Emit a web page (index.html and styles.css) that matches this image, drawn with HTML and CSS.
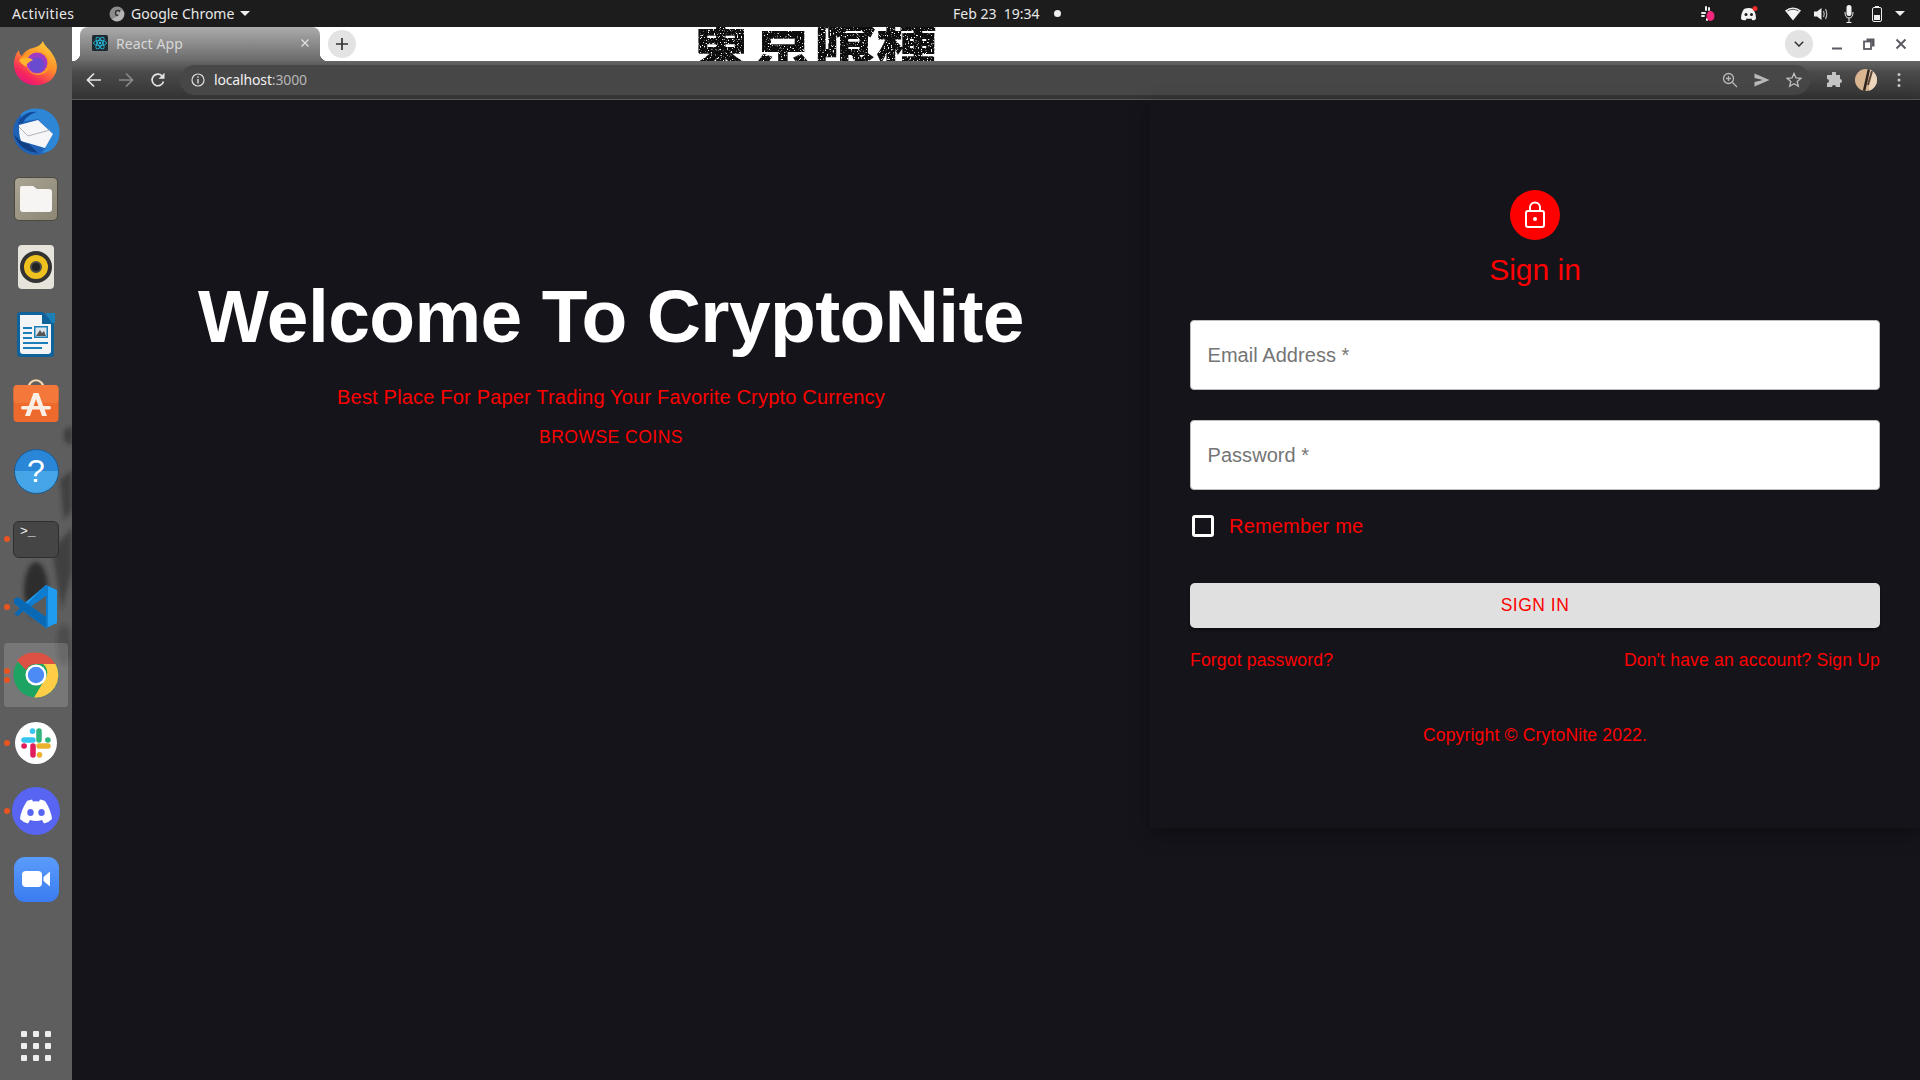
FILE: index.html
```html
<!DOCTYPE html>
<html lang="en">
  <head>
    <meta charset="UTF-8" />
    <title>React App</title>
    <link rel="stylesheet" href="styles.css">
  </head>
  <body>
    <svg class="svg-defs" width="0" height="0">
      <defs>
        <filter id="distress" x="0" y="0" width="100%" height="100%">
          <feTurbulence type="fractalNoise" baseFrequency="0.7" numOctaves="2" seed="4" result="noise"/>
          <feColorMatrix in="noise" type="matrix" values="0 0 0 0 0  0 0 0 0 0  0 0 0 0 0  0 0 0 -8 5.800" result="specks"/>
          <feComposite in="SourceGraphic" in2="specks" operator="in"/>
        </filter>
        <filter id="blur"><feGaussianBlur stdDeviation="2"/></filter>
      </defs>
    </svg>

    <header class="topbar">
      <span class="activities">Activities</span>
      <span class="app-menu">
        <svg class="app-icon" width="16" height="16" viewBox="0 0 16 16"><circle cx="8" cy="8" r="7.500" fill="#8c8c8c"/><circle cx="9" cy="7" r="3.200" fill="#333"/><circle cx="9" cy="7" r="1.800" fill="#aaa"/><path d="M3 13 L9 10 L12 4 L15 6 A7.500 7.500 0 0 1 6 15 Z" fill="#b5b5b5"/></svg>
        Google Chrome
        <i class="caret"></i>
      </span>
      <span class="clock">Feb 23&nbsp; 19:34 <i class="clock-dot"></i></span>
      <span class="tray">
        <svg class="tray-slack" width="14" height="16" viewBox="0 0 14 16"><g fill="#eee"><rect x="4" y="0" width="2" height="5" rx="1"/><rect x="7" y="1" width="2" height="4" rx="1"/><rect x="0" y="6" width="5" height="2" rx="1"/><rect x="0" y="9" width="4" height="2" rx="1"/><rect x="5" y="12" width="2" height="3" rx="1"/></g><ellipse cx="9.500" cy="10" rx="4" ry="5" fill="#f2267a"/></svg>
        <svg class="tray-discord" width="18" height="16" viewBox="0 0 18 16"><path d="M4 3 Q9 1 13 3 Q16 7 16 13 Q14 15 12 14 L11.500 12.500 Q9 13 6.500 12.500 L6 14 Q3 15 1 13 Q1 7 4 3 Z" fill="#f2f2f2"/><circle cx="6" cy="8.500" r="1.500" fill="#1c1c1c"/><circle cx="11.500" cy="8.500" r="1.500" fill="#1c1c1c"/><circle cx="15" cy="2.500" r="2.500" fill="#ef2a2a"/></svg>
        <svg class="tray-wifi" width="16" height="14" viewBox="0 0 16 14"><path d="M0 3.500 Q8 -2.500 16 3.500 L8 13.500 Z" fill="#f4f4f4"/><path d="M2.500 4 Q8 0.500 13.500 4" fill="none" stroke="#555" stroke-width="1"/></svg>
        <svg class="tray-volume" width="15" height="14" viewBox="0 0 15 14"><path d="M0 4.500 H3 L7.500 1 V13 L3 9.500 H0 Z" fill="#eee"/><path d="M9.500 4 Q11 7 9.500 10 M11.500 2 Q14 7 11.500 12" fill="none" stroke="#bbb" stroke-width="1.200"/></svg>
        <svg class="tray-mic" width="10" height="18" viewBox="0 0 10 18"><rect x="2.500" y="0" width="5" height="11" rx="2.500" fill="#f2f2f2"/><path d="M1 7 Q1 13 5 13 Q9 13 9 7 M5 13 V17.500 M2.500 17.500 H7.500" fill="none" stroke="#eee" stroke-width="1"/></svg>
        <svg class="tray-battery" width="10" height="16" viewBox="0 0 10 16"><rect x="0.500" y="1.500" width="9" height="14" rx="1.500" fill="none" stroke="#eee"/><rect x="3" y="0" width="4" height="2" fill="#eee"/><rect x="2" y="9" width="6" height="5" fill="#eee"/></svg>
        <i class="caret tray-caret"></i>
      </span>
    </header>

    <div class="desktop">
      <nav class="dock">
        <svg class="dock-stains" width="72" height="260" viewBox="0 0 72 260"><g fill="#262626" filter="url(#blur)"><ellipse cx="36" cy="170" rx="12" ry="28" opacity=".85"/><path d="M52 130 L72 108 V150 L62 190 Z" opacity=".55"/><path d="M64 10 l8 -4 v20 l-8 -6 Z" opacity=".6"/><path d="M60 60 L72 50 V90 L64 100 Z" opacity=".55"/><ellipse cx="64" cy="225" rx="7" ry="20" opacity=".35"/></g></svg>

        <div class="dock-item">
          <svg width="46" height="46" viewBox="0 0 46 46"><defs><linearGradient id="ffBody" x1="0.800" y1="0" x2="0.200" y2="1"><stop offset="0" stop-color="#ffd43a"/><stop offset=".45" stop-color="#ff8a2a"/><stop offset=".8" stop-color="#f5245f"/><stop offset="1" stop-color="#e31587"/></linearGradient></defs><path d="M30 1 C31 6 37 9 40 15 C46 24 45 33 38 40 C30 47 15 47 7 39 C-1 31 -1 18 6 10 C6 13 7 15 9 16 C11 12 15 9 20 8 C24 7 28 5 30 1 Z" fill="url(#ffBody)"/><path d="M7 19 C13 13 20 11 27 12 C33 13 37 18 37 24 C37 31 31 35 25 35 C19 35 15 31 14 27 C11 27 8 23 7 19 Z" fill="#ff9a26"/><circle cx="24" cy="23" r="10.500" fill="#a23bc4"/><circle cx="24" cy="25" r="7.500" fill="#6a4bd0"/><path d="M6 20 C11 17 16 17 20 20 C16 22 14 23 13 26 C10 25 7 23 6 20 Z" fill="#ffb52e"/></svg>
        </div>
        <div class="dock-item">
          <svg width="50" height="50" viewBox="0 0 50 50"><circle cx="25" cy="26" r="23" fill="#1f62b8"/><path d="M10 8 C18 0 36 0 44 12 C50 20 50 32 45 39 C42 44 36 47 30 47 L36 41 L30 43 L37 37 L42 28 L27 13 L10 16 Z" fill="#2d86d6"/><path d="M8 19 L27 14 L42 28 L34 42 L10 35 C8 30 8 24 8 19 Z" fill="#f6f6f8"/><path d="M8 21 L17 30 L39 24" fill="none" stroke="#aeb4bd" stroke-width="1"/><path d="M7 18 C9 10 17 5 26 6 C19 8 14 12 12 17 Z" fill="#124a9a"/><path d="M3 28 C6 33 12 37 18 38 L27 47 C15 46 6 39 3 28 Z" fill="#123f84"/></svg>
        </div>
        <div class="dock-item">
          <div class="files-tile"><svg width="32" height="26" viewBox="0 0 32 26"><path d="M2 0 H13 L17 3 H29 Q32 3 32 6 V23 Q32 26 29 26 H3 Q0 26 0 23 V2 Q0 0 2 0 Z" fill="#f6f5f3"/></svg></div>
        </div>
        <div class="dock-item">
          <div class="rhythm-tile"><i class="speaker"><i class="speaker-core"></i></i></div>
        </div>
        <div class="dock-item">
          <svg width="38" height="46" viewBox="0 0 38 46"><path d="M4 0 H26 L37 11 V42 Q37 45 34 45 H4 Q0 45 0 42 V3 Q0 0 4 0 Z" fill="#10639a"/><path d="M3 3 H25 V12 H34 V39 Q34 42 31 42 H6 Q3 42 3 39 Z" fill="#f3f4f5"/><path d="M28 1 H38 V11 H35 Z" fill="#1c80b8"/><g fill="#1a7fb8"><rect x="6" y="15" width="9" height="2"/><rect x="6" y="20" width="9" height="2"/><rect x="6" y="25" width="9" height="2"/><rect x="6" y="30" width="25" height="2"/><rect x="6" y="35" width="19" height="2"/></g><rect x="17" y="14" width="14" height="12" fill="#1a7fb8"/><rect x="18.500" y="15.500" width="11" height="9" fill="#dbe3ea"/><path d="M19 24 L23 18 L25 21 L27 19 L29 24 Z" fill="#555"/></svg>
        </div>
        <div class="dock-item">
          <svg width="46" height="48" viewBox="0 0 46 48"><path d="M15 11 C15 -2 31 -2 31 11" fill="none" stroke="#f0d8b0" stroke-width="2.200"/><rect x="0.500" y="6" width="45" height="37" rx="4" fill="#ee6a2c"/><rect x="0.500" y="6" width="45" height="18" rx="4" fill="#f4783a"/><path d="M20.500 14 H25.500 L34 37 H29 L23 20 L17 37 H12 Z" fill="#fbeee4"/><rect x="8" y="27" width="30" height="3.500" rx="1.700" fill="#fbeee4"/></svg>
        </div>
        <div class="dock-item">
          <div class="help-tile">?</div>
        </div>
        <div class="dock-item running">
          <div class="term-tile"><span class="term-prompt">&gt;_</span></div>
        </div>
        <div class="dock-item running">
          <svg width="44" height="44" viewBox="0 0 44 44"><path d="M32 0 L43 5 V38 L32 43 L6 22 Z" fill="#1f9cf0"/><path d="M32 0 L11 21 L2 14 L-1 17 L9 26 L32 43 L34 42 V1 Z" fill="#0f7ccf"/><path d="M32 11 V32 L17 21.500 Z" fill="#5b5b5b"/><path d="M0 14 L4 12 L32 32 V43 L0 18 Z" fill="#0a69b5"/><path d="M0 29 L4 31 L15 21 L11 18 Z" fill="#0a69b5"/></svg>
        </div>
        <div class="dock-item running running-two active">
          <svg width="46" height="46" viewBox="0 0 46 46"><circle cx="23" cy="23" r="22.500" fill="#1da462"/><path d="M23 .5 A22.500 22.500 0 0 1 42.500 12 H23 A11 11 0 0 0 13 18 L4 8.500 A22.500 22.500 0 0 1 23 .5 Z" fill="#dd5144"/><path d="M42.500 12 A22.500 22.500 0 0 1 21 45.400 L31.500 28 A11 11 0 0 0 30 12 Z" fill="#ffcd46"/><circle cx="23" cy="23" r="10.500" fill="#fff"/><circle cx="23" cy="23" r="8.200" fill="#4c8bf5"/></svg>
        </div>
        <div class="dock-item running">
          <div class="slack-tile"><svg width="30" height="30" viewBox="0 0 30 30" fill="none" stroke-width="5.500" stroke-linecap="round"><path d="M3 12 H12 M11.500 3 V3.200" stroke="#36c5f0"/><path d="M18 3 V12 M27 12 H26.800" stroke="#2eb67d"/><path d="M27 18 H18 M18.500 27 V26.800" stroke="#ecb22e"/><path d="M12 27 V18 M3 18 H3.200" stroke="#e01e5a"/></svg></div>
        </div>
        <div class="dock-item running">
          <div class="discord-tile"><svg width="32" height="25" viewBox="0 0 32 25"><path d="M7 2 Q11 .5 12 .5 L13 2.500 Q16 2 19 2.500 L20 .5 Q22 .5 25 2 Q31 11 32 20 Q28 24 24 24.500 L22 21 Q16 23 10 21 L8 24.500 Q4 24 0 20 Q1 11 7 2 Z" fill="#fff"/><ellipse cx="10.500" cy="13.500" rx="3.200" ry="3.500" fill="#5865f2"/><ellipse cx="21.500" cy="13.500" rx="3.200" ry="3.500" fill="#5865f2"/></svg></div>
        </div>
        <div class="dock-item">
          <div class="zoom-tile"><svg width="28" height="16" viewBox="0 0 28 16"><rect x="0" y="0" width="20" height="16" rx="4" fill="#fff"/><path d="M21.500 6 L28 .5 V15.500 L21.500 10 Z" fill="#fff"/></svg></div>
        </div>
        <div class="apps-grid">
          <i></i><i></i><i></i><i></i><i></i><i></i><i></i><i></i><i></i>
        </div>
      </nav>

      <div class="browser">
        <div class="tabstrip">
          <div class="wallpaper-text">東京喰種</div>
          <div class="tab">
            <svg class="favicon" width="16" height="16" viewBox="0 0 16 16"><rect width="16" height="16" rx="1.500" fill="#1e2a30"/><g fill="none" stroke="#27b8d8" stroke-width=".9"><ellipse cx="8" cy="8" rx="6.500" ry="2.600"/><ellipse cx="8" cy="8" rx="6.500" ry="2.600" transform="rotate(60 8 8)"/><ellipse cx="8" cy="8" rx="6.500" ry="2.600" transform="rotate(120 8 8)"/></g><circle cx="8" cy="8" r="1.300" fill="#27b8d8"/></svg>
            <span class="tab-title">React App</span>
            <svg class="tab-close" width="10" height="10" viewBox="0 0 10 10"><path d="M1.500 1.500 L8.500 8.500 M8.500 1.500 L1.500 8.500" stroke="#e2e2e2" stroke-width="1.300"/></svg>
          </div>
          <div class="round-btn new-tab"><svg width="12" height="12" viewBox="0 0 12 12"><path d="M6 0 V12 M0 6 H12" stroke="#333" stroke-width="1.700"/></svg></div>
          <div class="strip-end">
            <div class="round-btn"><svg width="10" height="6" viewBox="0 0 10 6"><path d="M.8 .8 L5 5 L9.200 .8" fill="none" stroke="#333" stroke-width="1.500"/></svg></div>
            <div class="window-btns">
              <svg width="12" height="12" viewBox="0 0 12 12"><rect x="1" y="9.500" width="10" height="2" fill="#5a5a62"/></svg>
              <svg width="12" height="12" viewBox="0 0 12 12"><path d="M3.500 .5 H11.500 V8.500 H9 V3 H3.500 Z" fill="#5a5a62"/><rect x="1" y="3.500" width="7" height="7.500" fill="none" stroke="#5a5a62" stroke-width="1.800"/></svg>
              <svg width="12" height="12" viewBox="0 0 12 12"><path d="M1.500 1.500 L10.500 10.500 M10.500 1.500 L1.500 10.500" stroke="#5a5a62" stroke-width="1.900"/></svg>
            </div>
          </div>
        </div>

        <div class="toolbar">
          <div class="nav-btns">
            <svg width="16" height="16" viewBox="0 0 16 16"><path d="M15 8 H2 M8 1.500 L1.500 8 L8 14.500" fill="none" stroke="#e4e4e4" stroke-width="1.700"/></svg>
            <svg width="16" height="16" viewBox="0 0 16 16"><path d="M1 8 H14 M8 1.500 L14.500 8 L8 14.500" fill="none" stroke="#8a8a8a" stroke-width="1.700"/></svg>
            <svg width="16" height="16" viewBox="0 0 16 16"><path d="M13.500 9.500 A5.800 5.800 0 1 1 12 3.800" fill="none" stroke="#e4e4e4" stroke-width="1.700"/><path d="M14.500 .8 V6.800 H8.500 Z" fill="#e4e4e4"/></svg>
          </div>
          <div class="omnibox">
            <svg width="14" height="14" viewBox="0 0 14 14"><circle cx="7" cy="7" r="6" fill="none" stroke="#ddd" stroke-width="1.200"/><rect x="6.300" y="6" width="1.400" height="4.500" fill="#ddd"/><rect x="6.300" y="3.300" width="1.400" height="1.500" fill="#ddd"/></svg>
            <span class="url">localhost<span class="url-port">:3000</span></span>
            <span class="omni-actions">
              <svg width="16" height="16" viewBox="0 0 16 16"><circle cx="6.500" cy="6.500" r="5" fill="none" stroke="#b9b9b9" stroke-width="1.300"/><path d="M10.300 10.300 L15 15 M6.500 4 V9 M4 6.500 H9" stroke="#b9b9b9" stroke-width="1.300"/></svg>
              <svg width="16" height="14" viewBox="0 0 16 14"><path d="M.5 .5 L15.500 7 L.5 13.500 L.5 9 L9 7 L.5 5 Z" fill="#b9b9b9"/></svg>
              <svg width="16" height="16" viewBox="0 0 16 16"><path d="M8 1.500 L10 6 L14.800 6.400 L11.200 9.600 L12.300 14.300 L8 11.800 L3.700 14.300 L4.800 9.600 L1.200 6.400 L6 6 Z" fill="none" stroke="#c2c2c2" stroke-width="1.300"/></svg>
            </span>
          </div>
          <div class="profile-btns">
            <svg width="16" height="16" viewBox="0 0 16 16"><path d="M6 1 a2 2 0 0 1 4 0 V3 H14 V7 a2 2 0 0 1 0 4 V15 H10 a2 2 0 0 0 -4 0 H1 V11 a2 2 0 0 0 0 -4 V3 H6 Z" fill="#c4c4c4"/></svg>
            <svg class="avatar" width="22" height="22" viewBox="0 0 22 22"><clipPath id="avatarClip"><circle cx="11" cy="11" r="11"/></clipPath><g clip-path="url(#avatarClip)"><rect width="22" height="22" fill="#d9b592"/><rect x="14" width="8" height="22" fill="#ecd6bd"/><path d="M14 0 L9 22" stroke="#2e2420" stroke-width="2.500"/><path d="M17 2 L13 16" stroke="#5b4334" stroke-width="2"/></g></svg>
            <svg class="menu-dots" width="4" height="16" viewBox="0 0 4 16"><circle cx="2" cy="2.500" r="1.500" fill="#c9c9c9"/><circle cx="2" cy="8" r="1.500" fill="#c9c9c9"/><circle cx="2" cy="13.500" r="1.500" fill="#c9c9c9"/></svg>
          </div>
        </div>

        <main class="page">
          <section class="hero">
            <h1 class="hero-title">Welcome To CryptoNite</h1>
            <p class="hero-sub">Best Place For Paper Trading Your Favorite Crypto Currency</p>
            <a class="hero-link" href="#">BROWSE COINS</a>
          </section>
          <section class="login-panel">
            <div class="lock-circle">
              <svg width="24" height="30" viewBox="0 0 24 30"><rect x="3" y="11" width="18" height="16" rx="2" fill="none" stroke="#fff" stroke-width="2"/><path d="M7 11 V7.500 a5 5 0 0 1 10 0 V11" fill="none" stroke="#fff" stroke-width="2"/><circle cx="12" cy="19" r="2" fill="#fff"/></svg>
            </div>
            <h2 class="login-title">Sign in</h2>
            <input class="field" type="text" placeholder="Email Address *" />
            <input class="field" type="password" placeholder="Password *" />
            <label class="remember"><i class="check-box"></i>Remember me</label>
            <button class="submit">SIGN IN</button>
            <div class="login-links">
              <a href="#">Forgot password?</a>
              <a href="#">Don't have an account? Sign Up</a>
            </div>
            <p class="copyright">Copyright © CrytoNite 2022.</p>
          </section>
        </main>
      </div>
    </div>
  </body>
</html>
```

FILE: styles.css
```css
* {
  box-sizing: border-box;
}

body {
  margin: 0;
  height: 1080px;
  overflow: hidden;
  display: flex;
  flex-direction: column;
  font-family: "Liberation Sans", Arial, sans-serif;
  background-color: #15141b;
}

i {
  display: block;
}

.svg-defs {
  position: absolute;
}

/* gnome top bar */
.topbar {
  height: 27px;
  flex: none;
  display: flex;
  align-items: center;
  position: relative;
  padding-left: 12px;
  background-color: #1c1c1c;
  color: #e8e8e8;
  font-family: "Noto Sans", sans-serif;
  font-size: 14px;
}

.activities {
  width: 97px;
  letter-spacing: 0.4px;
}

.app-menu {
  display: flex;
  align-items: center;
  gap: 6px;
}

.caret {
  width: 0;
  height: 0;
  border-left: 5px solid transparent;
  border-right: 5px solid transparent;
  border-top: 5px solid #eee;
}

.clock {
  position: absolute;
  left: 953px;
  display: flex;
  align-items: center;
  gap: 4px;
  white-space: pre;
}

.clock-dot {
  width: 7px;
  height: 7px;
  margin-left: 7px;
  border-radius: 50%;
  background-color: #eee;
}

.tray {
  margin-left: auto;
  display: flex;
  align-items: center;
  padding-right: 15px;
}

.tray-discord {
  margin-left: 25px;
}

.tray-wifi {
  margin-left: 27px;
}

.tray-volume {
  margin-left: 13px;
}

.tray-mic {
  margin-left: 15px;
}

.tray-battery {
  margin-left: 18px;
}

.tray-caret {
  margin-left: 13px;
}

.desktop {
  flex: 1;
  display: flex;
  min-height: 0;
}

/* ubuntu dock */
.dock {
  width: 72px;
  flex: none;
  position: relative;
  display: flex;
  flex-direction: column;
  padding-top: 2px;
  background-color: #5e5e5e;
}

.dock-stains {
  position: absolute;
  top: 393px;
  left: 0;
}

.dock-item {
  position: relative;
  height: 68px;
  display: flex;
  align-items: center;
  justify-content: center;
}

.dock-item.active::before {
  content: "";
  position: absolute;
  top: 2px;
  left: 4px;
  width: 64px;
  height: 64px;
  border-radius: 4px;
  background-color: rgba(255, 255, 255, 0.16);
}

.dock-item svg,
.dock-item > div {
  position: relative;
}

.dock-item.running::after {
  content: "";
  position: absolute;
  top: 31px;
  left: 4px;
  width: 6px;
  height: 6px;
  border-radius: 50%;
  background-color: #e95420;
}

.dock-item.running-two::after {
  top: 27px;
  box-shadow: 0 9px 0 #e95420;
}

.files-tile {
  width: 44px;
  height: 44px;
  display: flex;
  align-items: center;
  justify-content: center;
  border-radius: 5px;
  border: 1px solid #4e4a40;
  background: linear-gradient(135deg, #a9a393, #8c8675);
}

.rhythm-tile {
  width: 36px;
  height: 44px;
  display: flex;
  align-items: center;
  justify-content: center;
  border-radius: 4px;
  background-color: #e6e3da;
}

.speaker {
  width: 32px;
  height: 32px;
  display: flex;
  align-items: center;
  justify-content: center;
  border-radius: 50%;
  border: 4px solid #333;
  background-color: #efc11f;
}

.speaker-core {
  width: 12px;
  height: 12px;
  border-radius: 50%;
  border: 2px solid #4a4a4a;
  background-color: #222;
}

.help-tile {
  width: 45px;
  height: 45px;
  border-radius: 50%;
  text-align: center;
  border: 1px solid #1a5c96;
  background: linear-gradient(#2a87d8 50%, #45a5e6 50%);
  color: #fff;
  font-size: 32px;
  line-height: 43px;
}

.term-tile {
  width: 46px;
  height: 37px;
  padding: 3px 6px;
  border-radius: 6px;
  border: 1px solid #2e2e2e;
  background-color: #454545;
  color: #f2f2f2;
  font-family: "Liberation Mono", monospace;
  font-size: 13px;
  line-height: 14px;
}

.slack-tile {
  width: 42px;
  height: 42px;
  display: flex;
  align-items: center;
  justify-content: center;
  border-radius: 50%;
  background-color: #fff;
}

.discord-tile {
  width: 48px;
  height: 48px;
  display: flex;
  align-items: center;
  justify-content: center;
  border-radius: 50%;
  background-color: #5865f2;
}

.zoom-tile {
  width: 45px;
  height: 45px;
  display: flex;
  align-items: center;
  justify-content: center;
  border-radius: 11px;
  background: linear-gradient(#5a9cfb, #3a7cf0);
}

.apps-grid {
  margin: auto auto 19px;
  display: grid;
  grid-template-columns: repeat(3, 6px);
  gap: 6px;
}

.apps-grid i {
  height: 6px;
  border-radius: 1px;
  background-color: #eee;
}

/* chrome window */
.browser {
  flex: 1;
  min-width: 0;
  display: flex;
  flex-direction: column;
}

.tabstrip {
  height: 34px;
  flex: none;
  position: relative;
  overflow: hidden;
  display: flex;
  align-items: center;
  padding-left: 8px;
  background-color: #fff;
}

.wallpaper-text {
  position: absolute;
  top: -22px;
  left: 618px;
  color: #0a0a0a;
  font-family: "Noto Sans CJK JP", sans-serif;
  font-size: 62px;
  font-weight: 900;
  line-height: 70px;
  white-space: nowrap;
  filter: url(#distress);
}

.tab {
  position: relative;
  width: 240px;
  height: 34px;
  display: flex;
  align-items: center;
  padding: 0 10px 2px 12px;
  border-radius: 8px 8px 0 0;
  background: linear-gradient(#ababab, #6a6a6a);
  color: #d6d6d6;
  font-family: "Noto Sans", sans-serif;
  font-size: 14px;
}

.tab::before,
.tab::after {
  content: "";
  position: absolute;
  bottom: 0;
  width: 8px;
  height: 8px;
}

.tab::before {
  left: -8px;
  background: radial-gradient(circle at 0 0, transparent 8px, #6a6a6a 8.500px);
}

.tab::after {
  right: -8px;
  background: radial-gradient(circle at 100% 0, transparent 8px, #6a6a6a 8.500px);
}

.tab-title {
  margin-left: 8px;
  letter-spacing: 0.1px;
}

.tab-close {
  margin-left: auto;
}

.round-btn {
  position: relative;
  width: 28px;
  height: 28px;
  display: flex;
  align-items: center;
  justify-content: center;
  border-radius: 50%;
  background-color: #e3e3e3;
}

.new-tab {
  margin-left: 8px;
}

.strip-end {
  position: relative;
  margin-left: auto;
  display: flex;
  align-items: center;
}

.window-btns {
  width: 107px;
  display: flex;
  gap: 20px;
  padding: 0 12px 0 18px;
}

.toolbar {
  height: 39px;
  flex: none;
  display: flex;
  align-items: center;
  padding-bottom: 1px;
  border-bottom: 1px solid #5a5a5a;
  background: linear-gradient(#666 0, #4a4a4a 30%, #333 100%);
}

.nav-btns {
  width: 108px;
  flex: none;
  display: flex;
  gap: 16px;
  padding-left: 14px;
}

.omnibox {
  width: 1630px;
  height: 30px;
  flex: none;
  display: flex;
  align-items: center;
  padding: 0 8px 0 11px;
  border-radius: 15px;
  background-color: #474747;
  color: #f0f0f0;
  font-family: "Noto Sans", sans-serif;
  font-size: 14px;
}

.url {
  margin-left: 9px;
  letter-spacing: -0.15px;
}

.url-port {
  color: #b5b5b5;
}

.omni-actions {
  margin-left: auto;
  display: flex;
  align-items: center;
  gap: 16px;
}

.profile-btns {
  flex: 1;
  display: flex;
  align-items: center;
  gap: 13px;
  padding-left: 16px;
}

.menu-dots {
  margin-left: 7px;
}

/* the react page */
.page {
  flex: 1;
  display: grid;
  grid-template-columns: 7fr 5fr;
  align-items: start;
  background-color: #15141b;
}

.hero {
  padding-top: 171px;
  text-align: center;
}

.hero-title {
  margin: 0;
  color: #fff;
  font-size: 75px;
  font-weight: 700;
  line-height: 90px;
  letter-spacing: -0.625px;
}

.hero-sub {
  margin: 21px 0 0;
  color: #f00;
  font-size: 20px;
  line-height: 30px;
  letter-spacing: 0.1875px;
}

.hero-link {
  display: block;
  margin-top: 10px;
  color: #f00;
  font-size: 17.5px;
  line-height: 30px;
  letter-spacing: 0.5px;
  text-decoration: none;
}

.login-panel {
  height: 728px;
  display: flex;
  flex-direction: column;
  padding: 90px 40px 0;
  box-shadow: 0 6px 18px rgba(0, 0, 0, 0.35);
  background-color: #15141b;
}

.lock-circle {
  width: 50px;
  height: 50px;
  margin: 0 auto;
  display: flex;
  align-items: center;
  justify-content: center;
  border-radius: 50%;
  background-color: #f00;
}

.login-title {
  margin: 10px 0 30px;
  color: #f00;
  font-size: 30px;
  font-weight: 400;
  line-height: 40px;
  text-align: center;
}

.field {
  width: 100%;
  height: 70px;
  flex: none;
  margin-bottom: 30px;
  padding: 0 16.500px;
  border: 1px solid #bdbdbd;
  border-radius: 4px;
  background-color: #fff;
  font-family: "Liberation Sans", Arial, sans-serif;
  font-size: 20px;
  letter-spacing: 0.05px;
}

.field::placeholder {
  color: #757575;
  opacity: 1;
}

.remember {
  height: 22px;
  display: flex;
  align-items: center;
  margin: -5px 0 0 2px;
  color: #f00;
  font-size: 20px;
  letter-spacing: 0.1875px;
}

.check-box {
  width: 22px;
  height: 22px;
  margin-right: 15px;
  border: 3px solid #fff;
  border-radius: 3px;
}

.submit {
  width: 100%;
  height: 45px;
  flex: none;
  margin-top: 46px;
  border: none;
  border-radius: 5px;
  background-color: #e0e0e0;
  box-shadow: 0 2px 3px rgba(0, 0, 0, 0.4);
  color: #f00;
  font-family: "Liberation Sans", Arial, sans-serif;
  font-size: 17.5px;
  letter-spacing: 0.5px;
}

.login-links {
  display: flex;
  justify-content: space-between;
  margin-top: 20px;
  font-size: 17.5px;
  line-height: 24px;
  letter-spacing: 0.1875px;
}

.login-links a {
  color: #f00;
  text-decoration: none;
}

.copyright {
  margin: 51px 0 0;
  color: #f00;
  font-size: 17.5px;
  line-height: 24px;
  letter-spacing: 0.1875px;
  text-align: center;
}
```
